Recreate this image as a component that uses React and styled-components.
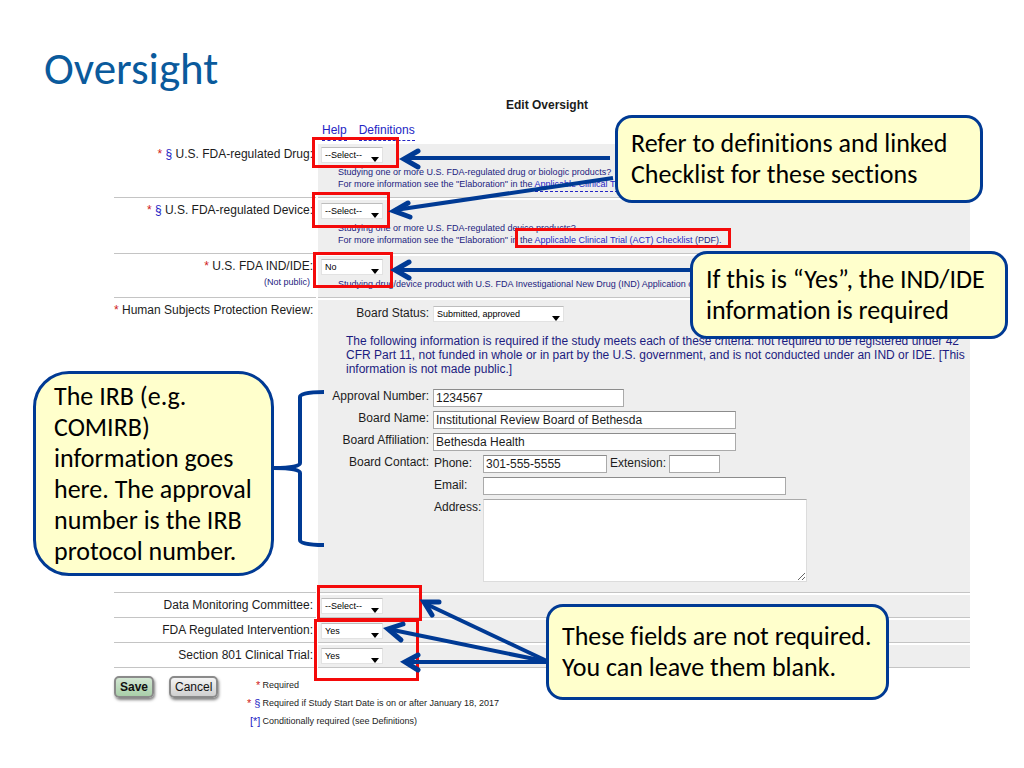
import { useId } from "react";
import styled, { createGlobalStyle, ThemeProvider } from "styled-components";

const theme = {
  ink: "#1c1c1c",
  hint: "#1c1c80",
  link: "#2424c4",
  required: "#d02020",
  cell: "#eeeeee",
  line: "#c4c4c4",
  title: "#0a5a9c",
  callout: "#ffffcc",
  marker: "#003a94",
  highlight: "#f40a0a",
  formFont: `"Liberation Sans", Arial, sans-serif`,
  slideFont: `Carlito, Calibri, Lato, sans-serif`,
};

const GlobalStyle = createGlobalStyle`
  * {
    box-sizing: border-box;
  }

  body {
    margin: 0;
    background: #fff;
  }
`;

const Slide = styled.main`
  position: relative;
  min-height: 100vh;
  padding: 40px 54px 0 114px;
  overflow: hidden;
  color: ${({ theme }) => theme.ink};
  font-family: ${({ theme }) => theme.formFont};
  font-size: 12px;
`;

const Title = styled.h1`
  margin: 0 0 0 -70px;
  color: ${({ theme }) => theme.title};
  font-family: ${({ theme }) => theme.slideFont};
  font-size: 45px;
  font-weight: 400;
  line-height: 57px;
`;

const FormTitle = styled.h2`
  margin: 0;
  padding-left: 10px;
  font-size: 12px;
  line-height: 16px;
  text-align: center;
`;

const HelpLinks = styled.nav`
  display: flex;
  gap: 12px;
  padding: 9px 0 3px 208px;
  line-height: 16px;
`;

const Link = styled.a`
  padding-bottom: 2px;
  border-bottom: 1px dashed ${({ theme }) => theme.link};
  color: ${({ theme }) => theme.link};
  text-decoration: none;
`;

const Rows = styled.div`
  display: flex;
  flex-direction: column;
  gap: 2px;
`;

const Row = styled.div`
  display: grid;
  grid-template-columns: 202px 1fr;
  gap: 2px;
`;

const LabelCell = styled.div`
  padding: 2px 3px 0 0;
  border-bottom: 1px solid ${({ theme }) => theme.line};
  line-height: 16px;
  text-align: right;
  white-space: nowrap;
`;

const FieldCell = styled.div`
  padding: 3px 3px ${({ $bottom }) => $bottom || 3}px;
  border-bottom: 1px solid ${({ theme }) => theme.line};
  background: ${({ theme }) => theme.cell};
`;

const Star = styled.span`
  color: ${({ theme }) => theme.required};
`;

const Mark = styled.span`
  color: ${({ theme }) => theme.link};
`;

const SmallNote = styled.div`
  padding-right: 3px;
  color: ${({ theme }) => theme.hint};
  font-size: 9px;
`;

const Hint = styled.p`
  margin: 3px 0 0 17px;
  color: ${({ theme }) => theme.hint};
  font-size: 9px;
  line-height: 12px;
  white-space: nowrap;
`;

const SelectBox = styled.span`
  position: relative;
  display: block;
  width: ${({ $width }) => $width || 62}px;
  height: 16px;

  &::after {
    content: "";
    position: absolute;
    right: 4px;
    bottom: 1px;
    border: 4px solid transparent;
    border-top: 5px solid #000;
    border-bottom: 0;
    pointer-events: none;
  }
`;

const Select = styled.select`
  display: block;
  width: 100%;
  height: 16px;
  padding: 0 3px;
  border: 1px solid #e2e2e2;
  border-top-color: #bdbdbd;
  border-radius: 0;
  background: #fff;
  color: #000;
  font-family: ${({ theme }) => theme.formFont};
  font-size: 9px;
  appearance: none;
`;

const Board = styled.div`
  display: grid;
  grid-template-columns: 108px 1fr;
  column-gap: 4px;
  row-gap: 4px;
  padding-top: ${({ $top }) => $top || 0}px;
`;

const BoardLabel = styled.label`
  line-height: 14px;
  text-align: right;
  white-space: nowrap;
`;

const Criteria = styled.p`
  margin: 12px 0 13px 25px;
  color: ${({ theme }) => theme.hint};
  line-height: 14px;
  white-space: nowrap;
`;

const Input = styled.input`
  width: ${({ $width }) => $width}px;
  height: 18px;
  padding: 0 2px;
  border: 1px solid #aaa;
  border-top-color: #8c8c8c;
  background: #fff;
  color: ${({ theme }) => theme.ink};
  font-family: ${({ theme }) => theme.formFont};
  font-size: 12px;
`;

const Contact = styled.div`
  display: grid;
  grid-template-columns: 46px 1fr;
  column-gap: 3px;
  row-gap: 4px;
  padding-left: 1px;
  line-height: 16px;
`;

const PhoneLine = styled.div`
  display: flex;
  gap: 3px;
`;

const TextArea = styled.textarea`
  display: block;
  width: 324px;
  height: 83px;
  border: 1px solid #dcdcdc;
  border-top-color: #aaa;
  background: #fff;
`;

const Footer = styled.footer`
  display: flex;
  align-items: flex-start;
  padding-top: 8px;
`;

const Button = styled.button`
  height: 22px;
  margin-right: 15px;
  padding: 0 4px;
  border: 2px solid #8a8a8a;
  border-radius: 5px;
  background: ${({ $primary }) =>
    $primary
      ? "linear-gradient(#d2e6d2, #a9cfa9)"
      : "linear-gradient(#f4f4f4, #cfcfcf)"};
  box-shadow: 1px 2px 3px rgba(0, 0, 0, 0.5);
  color: #111;
  font-family: ${({ theme }) => theme.formFont};
  font-size: 12px;
  font-weight: ${({ $primary }) => ($primary ? 700 : 400)};
`;

const Legend = styled.dl`
  display: grid;
  grid-template-columns: 20px auto;
  column-gap: 2px;
  margin: 0 0 0 7px;
  font-size: 9px;
  line-height: 18px;
`;

const LegendMark = styled.dt`
  font-size: 11px;
  text-align: right;
  white-space: nowrap;
`;

const LegendText = styled.dd`
  margin: 0;
`;

const Highlight = styled.div`
  position: absolute;
  top: ${({ $y }) => $y}px;
  left: ${({ $x }) => $x}px;
  width: ${({ $w }) => $w}px;
  height: ${({ $h }) => $h}px;
  border: 3px solid ${({ theme }) => theme.highlight};
  pointer-events: none;
`;

const Arrows = styled.svg`
  position: absolute;
  top: 0;
  left: 0;
  fill: none;
  stroke: ${({ theme }) => theme.marker};
  stroke-width: 4;
  pointer-events: none;
`;

const Callout = styled.aside`
  position: absolute;
  top: ${({ $y }) => $y}px;
  left: ${({ $x }) => $x}px;
  display: flex;
  align-items: center;
  width: ${({ $w }) => $w}px;
  min-height: ${({ $h }) => $h}px;
  padding: 0 ${({ $pad }) => $pad || 13}px;
  border: 3px solid ${({ theme }) => theme.marker};
  border-radius: ${({ $radius }) => $radius || 17}px;
  background: ${({ theme }) => theme.callout};
  color: #000;
  font-family: ${({ theme }) => theme.slideFont};
  font-size: 26px;
  font-variant-ligatures: none;
  line-height: 31px;
  white-space: nowrap;
`;

const highlights = [
  { x: 312, y: 137, w: 87, h: 31 },
  { x: 312, y: 192, w: 78, h: 36 },
  { x: 313, y: 252, w: 80, h: 36 },
  { x: 515, y: 228, w: 216, h: 20 },
  { x: 317, y: 585, w: 105, h: 36 },
  { x: 314, y: 619, w: 105, h: 62 },
];

const arrows = [
  { line: "M610 158 L404 158", head: "M418 151 L404 159 L418 167" },
  { line: "M613 178 L395 210", head: "M408 203 L394 211 L410 217" },
  { line: "M692 270 L395 270", head: "M409 262 L395 270 L409 278" },
  { line: "M549 662 L424 603", head: "M439 602 L424 602 L432 615" },
  { line: "M549 662 L388 629", head: "M403 624 L388 629 L401 640" },
  { line: "M549 662 L405 662", head: "M418 655 L405 662 L418 670" },
];

const Dropdown = ({ value, options = [], width, id }) => (
  <SelectBox $width={width}>
    <Select id={id} defaultValue={value}>
      {[value, ...options].map((option) => (
        <option key={option}>{option}</option>
      ))}
    </Select>
  </SelectBox>
);

const SelectRow = ({ marks, label, note, value, options, children }) => {
  const id = useId();
  return (
    <Row>
      <LabelCell>
        {marks} <label htmlFor={id}>{label}</label>
        {note && <SmallNote>{note}</SmallNote>}
      </LabelCell>
      <FieldCell $bottom={children ? 7 : 3}>
        <Dropdown id={id} value={value} options={options} />
        {children}
      </FieldCell>
    </Row>
  );
};

const ChecklistHint = ({ product }) => (
  <Hint>
    Studying one or more U.S. FDA-regulated {product} products?
    <br />
    For more information see the "Elaboration" in the{" "}
    <Link href="#checklist">Applicable Clinical Trial (ACT) Checklist</Link>{" "}
    (PDF).
  </Hint>
);

const BoardReview = () => (
  <Row>
    <LabelCell>
      <Star>*</Star> Human Subjects Protection Review:
    </LabelCell>
    <FieldCell $bottom={10}>
      <Board $top={3}>
        <BoardLabel htmlFor="status">Board Status:</BoardLabel>
        <Dropdown id="status" value="Submitted, approved" width={131} />
      </Board>
      <Criteria>
        The following information is required if the study meets each of these
        criteria: not required to be registered under 42
        <br />
        CFR Part 11, not funded in whole or in part by the U.S. government, and
        is not conducted under an IND or IDE. [This
        <br />
        information is not made public.]
      </Criteria>
      <Board>
        <BoardLabel htmlFor="approval">Approval Number:</BoardLabel>
        <Input id="approval" $width={191} defaultValue="1234567" />
        <BoardLabel htmlFor="board">Board Name:</BoardLabel>
        <Input
          id="board"
          $width={303}
          defaultValue="Institutional Review Board of Bethesda"
        />
        <BoardLabel htmlFor="affiliation">Board Affiliation:</BoardLabel>
        <Input
          id="affiliation"
          $width={303}
          defaultValue="Bethesda Health"
        />
        <BoardLabel as="span">Board Contact:</BoardLabel>
        <Contact>
          <label htmlFor="phone">Phone:</label>
          <PhoneLine>
            <Input id="phone" $width={124} defaultValue="301-555-5555" />
            <label htmlFor="extension">Extension:</label>
            <Input id="extension" $width={51} />
          </PhoneLine>
          <label htmlFor="email">Email:</label>
          <Input id="email" $width={303} />
          <label htmlFor="address">Address:</label>
          <TextArea id="address" />
        </Contact>
      </Board>
    </FieldCell>
  </Row>
);

const App = () => {
  const conditional = (
    <>
      <Star>*</Star> <Mark>§</Mark>
    </>
  );
  return (
    <ThemeProvider theme={theme}>
      <GlobalStyle />
      <Slide>
        <Title>Oversight</Title>
        <FormTitle>Edit Oversight</FormTitle>
        <HelpLinks>
          <Link href="#help">Help</Link>
          <Link href="#definitions">Definitions</Link>
        </HelpLinks>
        <Rows>
          <SelectRow
            marks={conditional}
            label="U.S. FDA-regulated Drug:"
            value="--Select--"
            options={["Yes", "No"]}
          >
            <ChecklistHint product="drug or biologic" />
          </SelectRow>
          <SelectRow
            marks={conditional}
            label="U.S. FDA-regulated Device:"
            value="--Select--"
            options={["Yes", "No"]}
          >
            <ChecklistHint product="device" />
          </SelectRow>
          <SelectRow
            marks={<Star>*</Star>}
            label="U.S. FDA IND/IDE:"
            note="(Not public)"
            value="No"
            options={["Yes"]}
          >
            <Hint>
              Studying drug/device product with U.S. FDA Investigational New
              Drug (IND) Application or Investigational Device Exemption
            </Hint>
          </SelectRow>
          <BoardReview />
          <SelectRow
            label="Data Monitoring Committee:"
            value="--Select--"
            options={["Yes", "No"]}
          />
          <SelectRow
            label="FDA Regulated Intervention:"
            value="Yes"
            options={["No"]}
          />
          <SelectRow
            label="Section 801 Clinical Trial:"
            value="Yes"
            options={["No"]}
          />
        </Rows>
        <Footer>
          <Button type="button" $primary>
            Save
          </Button>
          <Button type="button">Cancel</Button>
          <Legend>
            <LegendMark>
              <Star>*</Star>
            </LegendMark>
            <LegendText>Required</LegendText>
            <LegendMark>{conditional}</LegendMark>
            <LegendText>
              Required if Study Start Date is on or after January 18, 2017
            </LegendText>
            <LegendMark>
              <Mark>[*]</Mark>
            </LegendMark>
            <LegendText>Conditionally required (see Definitions)</LegendText>
          </Legend>
        </Footer>

        {highlights.map(({ x, y, w, h }) => (
          <Highlight key={`${x}-${y}`} $x={x} $y={y} $w={w} $h={h} />
        ))}
        <Arrows width="1024" height="768" viewBox="0 0 1024 768" aria-hidden>
          {arrows.map(({ line, head }) => (
            <g key={head}>
              <path d={line} />
              <path d={head} strokeWidth="5" strokeLinecap="round" />
            </g>
          ))}
          <path d="M324 392 Q300 392 300 397 V463 Q300 468 274 468 Q300 468 300 473 V540 Q300 545 324 545" />
        </Arrows>
        <Callout $x={615} $y={115} $w={368} $h={88}>
          Refer to definitions and linked
          <br />
          Checklist for these sections
        </Callout>
        <Callout $x={690} $y={251} $w={318} $h={88}>
          If this is “Yes”, the IND/IDE
          <br />
          information is required
        </Callout>
        <Callout $x={33} $y={371} $w={241} $h={205} $pad={18} $radius={36}>
          The IRB (e.g.
          <br />
          COMIRB)
          <br />
          information goes
          <br />
          here. The approval
          <br />
          number is the IRB
          <br />
          protocol number.
        </Callout>
        <Callout $x={546} $y={604} $w={343} $h={96}>
          These fields are not required.
          <br />
          You can leave them blank.
        </Callout>
      </Slide>
    </ThemeProvider>
  );
};

export default App;
